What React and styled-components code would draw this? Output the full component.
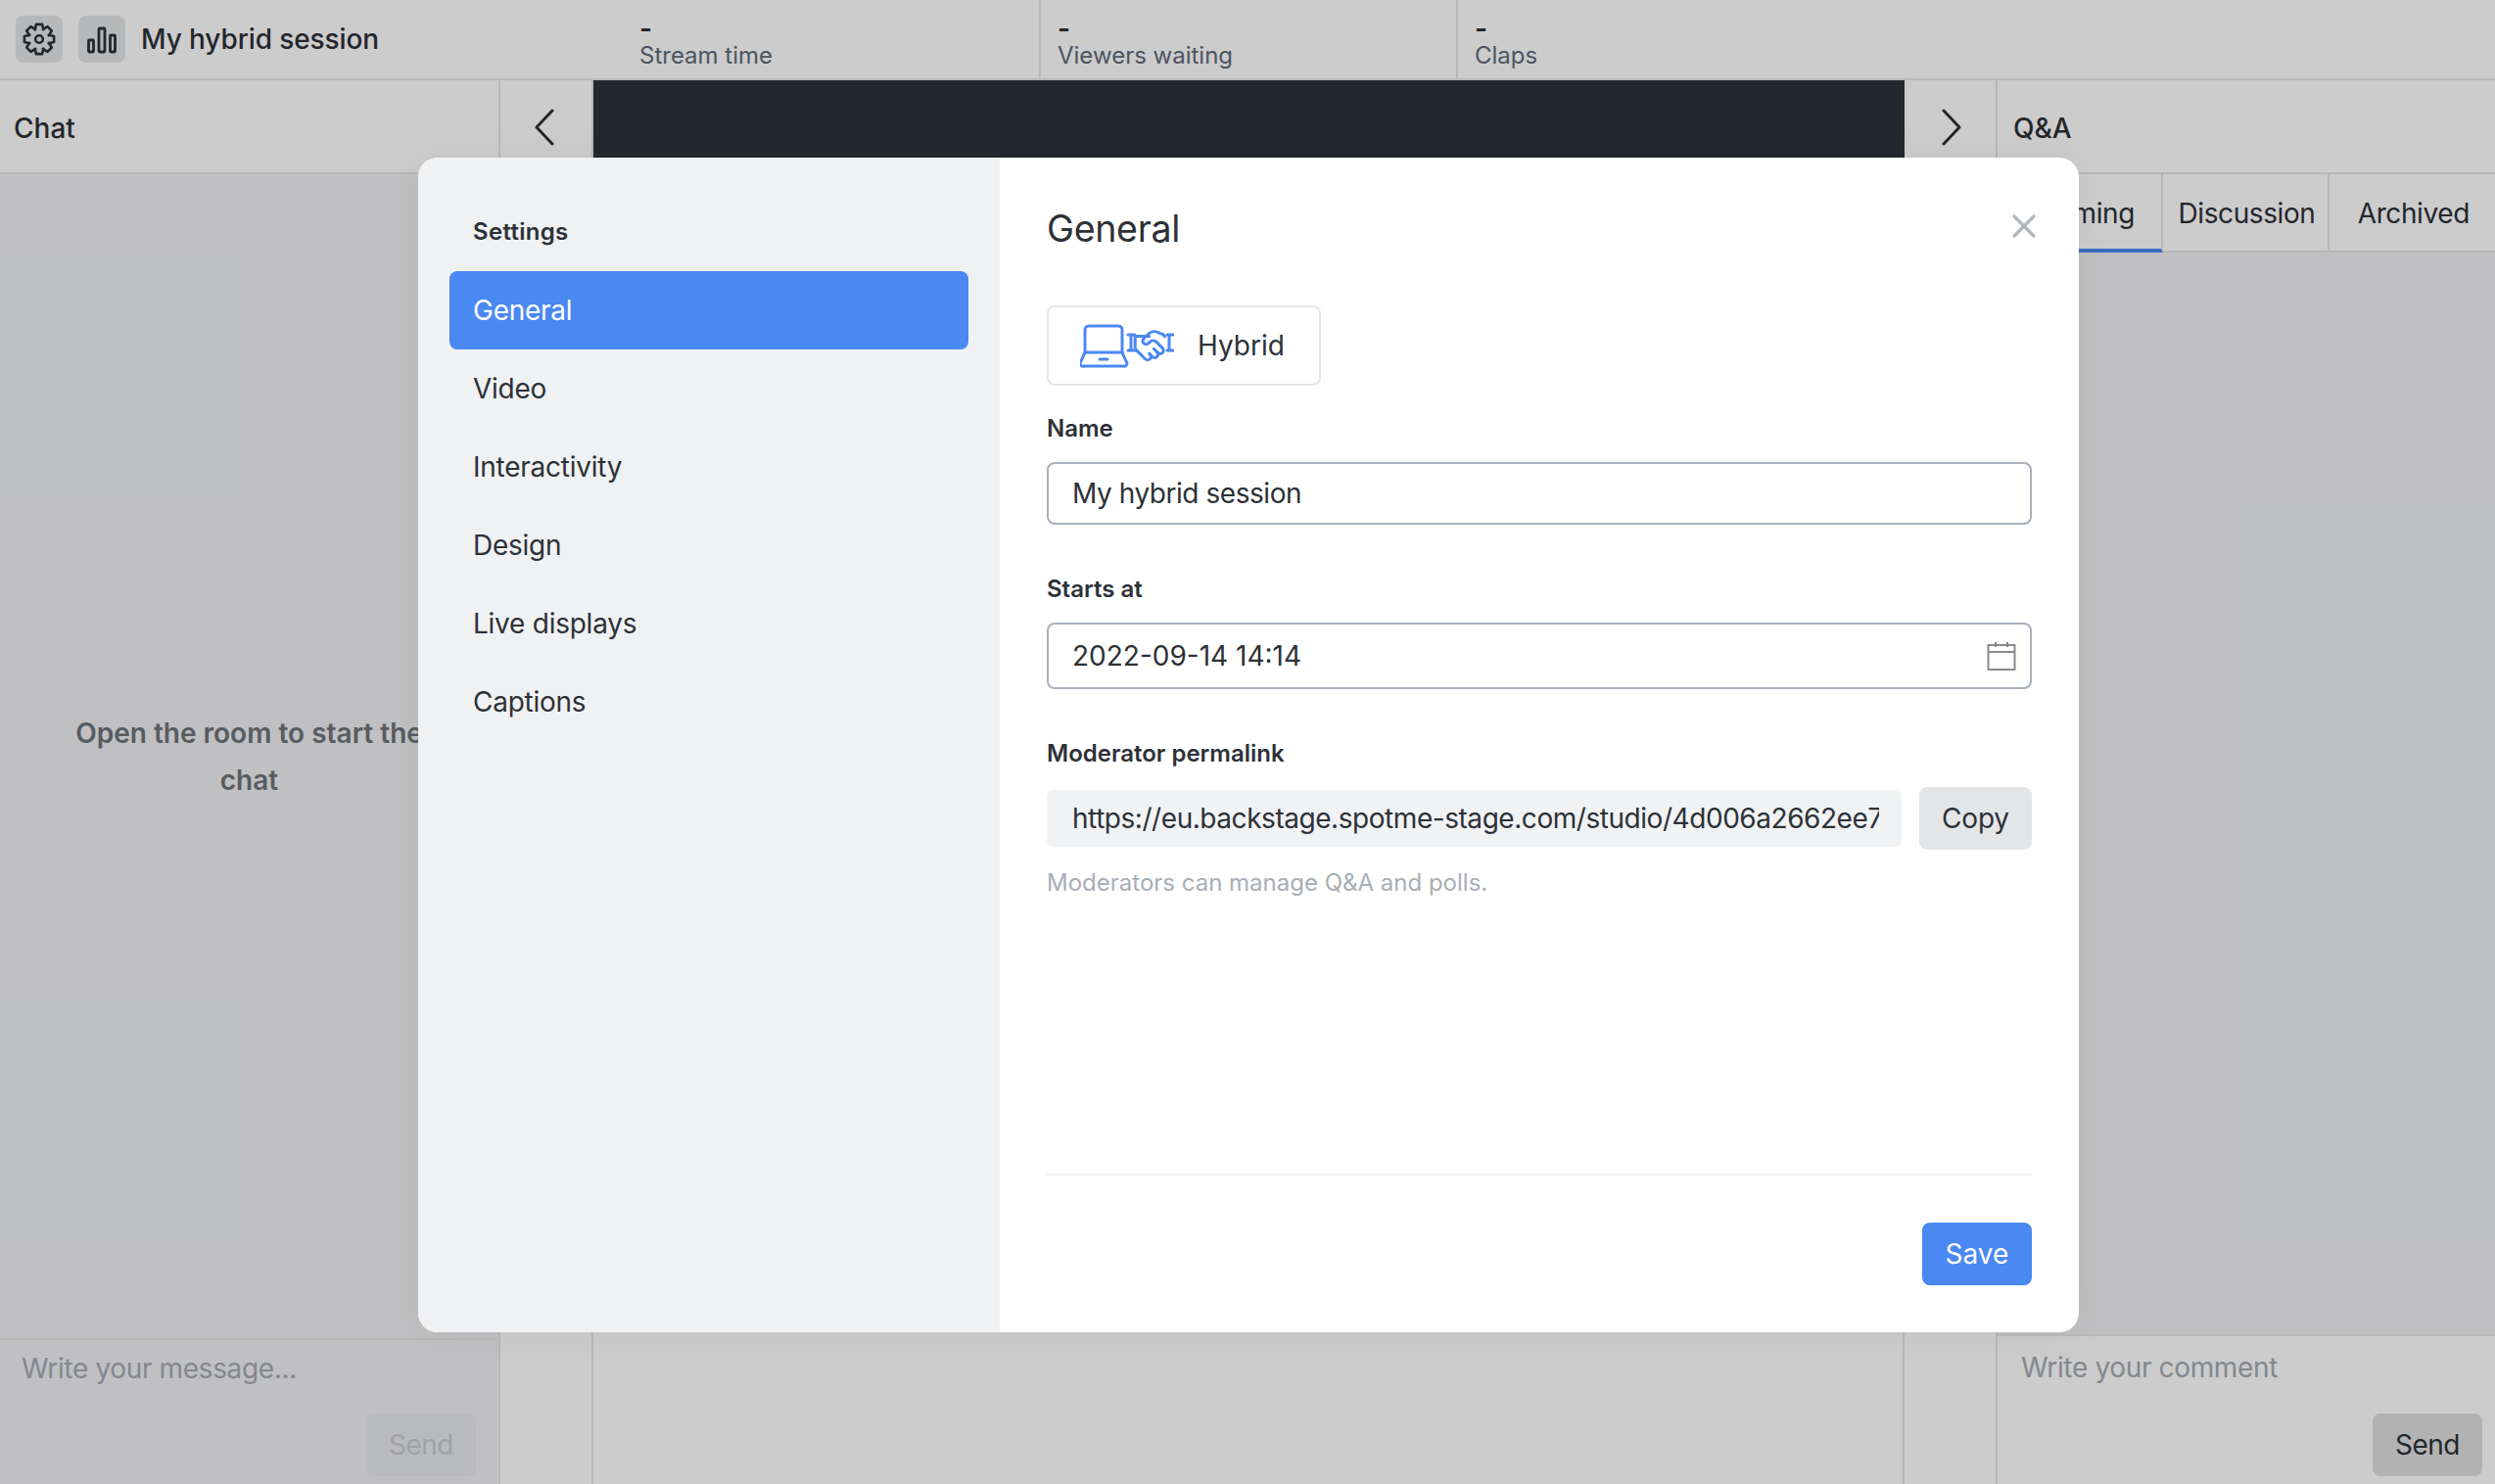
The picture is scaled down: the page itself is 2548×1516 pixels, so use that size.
import React from 'react';
import styled, { createGlobalStyle } from 'styled-components';
import { X } from 'lucide-react';

const GlobalStyle = createGlobalStyle`
  html, body {
    margin: 0;
    padding: 0;
    background: #fff;
    font-family: Inter, "Noto Sans", sans-serif;
    letter-spacing: -0.3px;
    color: #2d3137;
  }
  * { box-sizing: border-box; }
`;

const Page = styled.div`
  position: relative;
  width: 2548px;
  height: 1516px;
  overflow: hidden;
  display: flex;
  flex-direction: column;
  background: #fff;
`;

const TopBar = styled.header`
  height: 82px;
  flex: none;
  display: flex;
  border-bottom: 2px solid #e6e6e6;
`;

const SessionInfo = styled.div`
  width: 635px;
  display: flex;
  align-items: center;
  gap: 16px;
  padding-left: 16px;
`;

const IconButton = styled.button`
  width: 48px;
  height: 48px;
  padding: 0;
  border: 0;
  border-radius: 8px;
  background: #e5e6e8;
  color: #2d3137;
  display: flex;
  align-items: center;
  justify-content: center;
`;

const SessionName = styled.div`
  font-size: 28px;
  font-weight: 500;
  letter-spacing: -0.1px;
`;

const Stat = styled.div`
  width: 426px;
  padding: 14px 0 0 ${(p) => (p.$first ? 18 : 17)}px;
  border-left: ${(p) => (p.$first ? '0' : '2px solid #e6e6e6')};
`;

const StatValue = styled.div`
  font-size: 28px;
  font-weight: 600;
  line-height: 30px;
  height: 28px;
`;

const StatLabel = styled.div`
  font-size: 24px;
  line-height: 30px;
  letter-spacing: 0;
  color: #5f6b77;
`;

const Columns = styled.div`
  flex: 1;
  display: flex;
  min-height: 0;
`;

const Panel = styled.section`
  display: flex;
  flex-direction: column;
  width: ${(p) => p.$width}px;
  flex: ${(p) => (p.$width ? 'none' : '1')};
  border-right: ${(p) => (p.$width ? '2px solid #e6e6e6' : '0')};
`;

const PanelHeader = styled.div`
  height: 96px;
  flex: none;
  display: flex;
  align-items: center;
  padding: 3px 0 0 ${(p) => p.$pad}px;
  font-size: 28px;
  font-weight: 500;
  letter-spacing: 0;
  border-bottom: 2px solid #e6e6e6;
`;

const NavCell = styled.div`
  height: 96px;
  display: flex;
  align-items: center;
  justify-content: center;
  padding: ${(p) => (p.$right ? '0 0 0 3px' : '0 3px 0 0')};
  color: #2d3137;
`;

const Stage = styled.div`
  height: 94px;
  margin-right: -2px;
  background: #2d3137;
`;

const Tabs = styled.div`
  height: 80px;
  flex: none;
  display: flex;
  border-bottom: 2px solid #e6e6e6;
`;

const Tab = styled.div`
  width: 33.333%;
  flex: none;
  display: flex;
  align-items: center;
  justify-content: center;
  padding: 4px ${(p) => (p.$active ? 20 : 0)}px 0 ${(p) => (p.$active ? 0 : 3)}px;
  font-size: 28px;
  letter-spacing: -0.4px;
  margin-bottom: -2px;
  border-right: ${(p) => (p.$last ? '0' : '2px solid #e6e6e6')};
  border-bottom: 4px solid ${(p) => (p.$active ? '#4a88f2' : 'transparent')};
`;

const PanelBody = styled.div`
  flex: 1;
  display: flex;
  align-items: center;
  justify-content: center;
  background: #f0f1f3;
  padding: 0 60px;
`;

const EmptyText = styled.p`
  margin: 0;
  text-align: center;
  font-size: 28px;
  line-height: 48px;
  font-weight: 600;
  letter-spacing: 0;
  color: #6f747a;
`;

const Composer = styled.div`
  height: ${(p) => p.$height}px;
  flex: none;
  padding: ${(p) => p.$top}px ${(p) => p.$right}px 8px ${(p) => p.$left}px;
  display: flex;
  flex-direction: column;
  background: ${(p) => (p.$disabled ? '#f0f1f3' : '#fff')};
  border-top: 2px solid #e6e6e6;
`;

const ComposerInput = styled.input`
  border: 0;
  outline: 0;
  padding: 0;
  background: transparent;
  font: 400 28px/36px Inter, sans-serif;
  letter-spacing: -0.35px;
  &::placeholder { color: #a5abb2; opacity: 1; }
`;

const SendButton = styled.button`
  width: 112px;
  height: 64px;
  margin-top: auto;
  align-self: flex-end;
  border: 0;
  border-radius: 8px;
  font: 400 28px Inter, sans-serif;
  letter-spacing: -0.5px;
  color: ${(p) => (p.disabled ? '#c9cbcd' : '#2d3137')};
  background: ${(p) => (p.disabled ? '#e8e9eb' : '#e0e0e1')};
`;

const Overlay = styled.div`
  position: absolute;
  inset: 0;
  padding: 161px 0 0 2px;
  display: flex;
  justify-content: center;
  align-items: flex-start;
  background: rgba(0, 0, 0, 0.2);
`;

const Modal = styled.div`
  width: 1696px;
  height: 1200px;
  display: flex;
  border-radius: 20px;
  overflow: hidden;
  background: #fff;
  box-shadow: 0 0 40px rgba(0, 0, 0, 0.05);
`;

const Sidebar = styled.nav`
  width: 594px;
  flex: none;
  padding: 60px 32px 0 32px;
  background: #f0f1f3;
`;

const SidebarTitle = styled.div`
  font-size: 24px;
  font-weight: 600;
  line-height: 32px;
  letter-spacing: 0.3px;
  padding-left: 24px;
  margin-bottom: 24px;
`;

const SidebarItem = styled.div`
  height: 80px;
  display: flex;
  align-items: center;
  padding-left: 24px;
  font-size: 28px;
  letter-spacing: -0.25px;
  border-radius: 8px;
  color: ${(p) => (p.$active ? '#fff' : '#2d3137')};
  background: ${(p) => (p.$active ? '#4a88f2' : 'transparent')};
`;

const Main = styled.div`
  position: relative;
  flex: 1;
  display: flex;
  flex-direction: column;
  padding: 48px 48px 48px 48px;
`;

const Title = styled.h2`
  margin: 0 0 53px;
  font-size: 37.5px;
  line-height: 50px;
  font-weight: 400;
`;

const CloseButton = styled.button`
  position: absolute;
  top: 50px;
  right: 36px;
  width: 40px;
  height: 40px;
  padding: 0;
  border: 0;
  background: transparent;
  color: #b0b7bf;
  display: flex;
  align-items: center;
  justify-content: center;
`;

const TypeBadge = styled.div`
  width: 280px;
  height: 82px;
  display: flex;
  align-items: center;
  gap: 24px;
  padding-left: 32px;
  font-size: 28px;
  letter-spacing: 0;
  border: 2px solid #e6e6e6;
  border-radius: 8px;
  margin-bottom: 28px;
`;

const Field = styled.div`
  display: flex;
  flex-direction: column;
  margin-bottom: ${(p) => p.$gap}px;
`;

const Label = styled.label`
  font-size: 24px;
  line-height: 32px;
  font-weight: 600;
  letter-spacing: 0;
  margin-bottom: 18px;
`;

const InputWrap = styled.div`
  position: relative;
  height: ${(p) => p.$height}px;
`;

const TextInput = styled.input`
  width: 100%;
  height: 100%;
  padding: 0 24px;
  border: 2px solid #a9b0ba;
  border-radius: 8px;
  outline: 0;
  font: 400 28px Inter, sans-serif;
  letter-spacing: ${(p) => p.$spacing}px;
  color: #2d3137;
`;

const CalendarSlot = styled.span`
  position: absolute;
  right: 16px;
  top: 19px;
  color: #8a8a8a;
  display: flex;
`;

const CopyRow = styled.div`
  display: flex;
  align-items: center;
  gap: 18px;
`;

const ReadOnlyInput = styled.input`
  flex: 1;
  min-width: 0;
  height: 58px;
  padding: 0 23px 0 26px;
  border: 0;
  border-radius: 6px;
  outline: 0;
  background: #f1f2f4;
  font: 400 28px Inter, sans-serif;
  letter-spacing: -0.45px;
  color: #2d3137;
`;

const CopyButton = styled.button`
  width: 115px;
  height: 64px;
  flex: none;
  border: 0;
  border-radius: 8px;
  background: #e4e5e7;
  font: 400 28px Inter, sans-serif;
  letter-spacing: -0.2px;
  color: #2d3137;
`;

const Hint = styled.div`
  margin-top: 18px;
  font-size: 24px;
  line-height: 32px;
  letter-spacing: 0;
  color: #a9aeb5;
`;

const Footer = styled.div`
  margin-top: auto;
  height: 114px;
  display: flex;
  justify-content: flex-end;
  align-items: flex-end;
  border-top: 2px solid #f0f0f0;
`;

const SaveButton = styled.button`
  width: 112px;
  height: 64px;
  border: 0;
  border-radius: 8px;
  background: #4a88f2;
  color: #fff;
  font: 400 28px Inter, sans-serif;
  letter-spacing: 0;
`;

// eight toothed cog, the packaged gears don't have the same teeth
const cogPath = () => {
  const pts = [];
  for (let i = 0; i < 8; i++) {
    const a = (i * Math.PI) / 4 - Math.PI / 2;
    [[-0.42, 10.6], [-0.2, 15.4], [0.2, 15.4], [0.42, 10.6]].forEach(([da, r]) => {
      pts.push(`${(18 + r * Math.cos(a + da)).toFixed(2)} ${(18 + r * Math.sin(a + da)).toFixed(2)}`);
    });
  }
  return `M${pts.join('L')}Z`;
};

const GearIcon = () => (
  <svg width="36" height="36" viewBox="0 0 36 36" fill="none" stroke="currentColor" strokeWidth="2.6" strokeLinejoin="round">
    <path d={cogPath()} />
    <circle cx="18" cy="18" r="3.8" />
  </svg>
);

const BarsIcon = () => (
  <svg width="32" height="32" viewBox="0 0 32 32" fill="none" stroke="currentColor" strokeWidth="2.8" strokeLinejoin="round">
    <rect x="2.5" y="17" width="5" height="12" rx="1" />
    <rect x="13" y="5" width="6" height="24" rx="1" />
    <rect x="24.5" y="12" width="5" height="17" rx="1" />
  </svg>
);

const ChevronIcon = ({ right }) => (
  <svg width="20" height="38" viewBox="0 0 20 38" fill="none" stroke="currentColor" strokeWidth="3" strokeLinecap="round" strokeLinejoin="round">
    <path d={right ? 'M2 2l16 17L2 36' : 'M18 2L2 19l16 17'} />
  </svg>
);

const CalendarIcon = () => (
  <svg width="30" height="30" viewBox="0 0 30 30" fill="none" stroke="currentColor" strokeWidth="2">
    <rect x="1.5" y="4" width="27" height="25" />
    <path d="M1.5 11h27M9 1v5M21 1v5" />
  </svg>
);

const HybridIcon = () => (
  <svg width="96" height="48" viewBox="0 0 96 48" fill="none" stroke="#4a88f2" strokeWidth="3" strokeLinecap="round" strokeLinejoin="round">
    <path d="M5 31V8a4 4 0 0 1 4-4h30a4 4 0 0 1 4 4v23" />
    <path d="M5 31h38l4 9a3 3 0 0 1-3 5H4a3 3 0 0 1-3-5z" />
    <path d="M20 38h8" />
    <path d="M49 13h7M49 29h7M52 13v16M89 13h6M89 29h6M91 13v16" />
    <g transform="translate(53 5) scale(1.6)" strokeWidth="1.9">
      <path d="m11 17 2 2a1 1 0 1 0 3-3" />
      <path d="m14 14 2.5 2.5a1 1 0 1 0 3-3l-3.88-3.88a3 3 0 0 0-4.24 0l-.88.88a1 1 0 1 1-3-3l2.81-2.81a5.79 5.79 0 0 1 7.06-.87l.47.28a2 2 0 0 0 1.42.25L21 6" />
      <path d="M2 6 2 14l6.5 6.5a1 1 0 1 0 3-3" />
      <path d="M2 6h9" />
    </g>
  </svg>
);

const sections = ['General', 'Video', 'Interactivity', 'Design', 'Live displays', 'Captions'];
const stats = ['Stream time', 'Viewers waiting', 'Claps'];
const tabs = ['Upcoming', 'Discussion', 'Archived'];

export default function App() {
  return (
    <Page>
      <GlobalStyle />
      <TopBar>
        <SessionInfo>
          <IconButton><GearIcon /></IconButton>
          <IconButton><BarsIcon /></IconButton>
          <SessionName>My hybrid session</SessionName>
        </SessionInfo>
        {stats.map((label, i) => (
          <Stat key={label} $first={i === 0}>
            <StatValue>-</StatValue>
            <StatLabel>{label}</StatLabel>
          </Stat>
        ))}
      </TopBar>

      <Columns>
        <Panel $width={511}>
          <PanelHeader $pad={14}>Chat</PanelHeader>
          <PanelBody>
            <EmptyText>Open the room to start the chat</EmptyText>
          </PanelBody>
          <Composer $height={149} $disabled $top={11} $left={22} $right={23}>
            <ComposerInput placeholder="Write your message..." readOnly />
            <SendButton disabled>Send</SendButton>
          </Composer>
        </Panel>

        <Panel $width={95}>
          <NavCell><ChevronIcon /></NavCell>
        </Panel>

        <Panel $width={1339}>
          <Stage />
        </Panel>

        <Panel $width={95}>
          <NavCell $right><ChevronIcon right /></NavCell>
        </Panel>

        <Panel>
          <PanelHeader $pad={16}>Q&amp;A</PanelHeader>
          <Tabs>
            {tabs.map((tab, i) => (
              <Tab key={tab} $active={i === 0} $last={i === tabs.length - 1}>{tab}</Tab>
            ))}
          </Tabs>
          <PanelBody />
          <Composer $height={153} $top={14} $left={24} $right={13}>
            <ComposerInput placeholder="Write your comment" readOnly />
            <SendButton>Send</SendButton>
          </Composer>
        </Panel>
      </Columns>

      <Overlay>
        <Modal>
          <Sidebar>
            <SidebarTitle>Settings</SidebarTitle>
            {sections.map((item, i) => (
              <SidebarItem key={item} $active={i === 0}>{item}</SidebarItem>
            ))}
          </Sidebar>
          <Main>
            <Title>General</Title>
            <CloseButton><X size={40} strokeWidth={2} /></CloseButton>
            <TypeBadge><HybridIcon />Hybrid</TypeBadge>
            <Field $gap={50}>
              <Label>Name</Label>
              <InputWrap $height={64}>
                <TextInput $spacing={-0.45} defaultValue="My hybrid session" />
              </InputWrap>
            </Field>
            <Field $gap={50}>
              <Label>Starts at</Label>
              <InputWrap $height={68}>
                <TextInput $spacing={0} defaultValue="2022-09-14 14:14" />
                <CalendarSlot><CalendarIcon /></CalendarSlot>
              </InputWrap>
            </Field>
            <Field $gap={0}>
              <Label>Moderator permalink</Label>
              <CopyRow>
                <ReadOnlyInput readOnly value="https://eu.backstage.spotme-stage.com/studio/4d006a2662ee7e1f0a6d4c9b" />
                <CopyButton>Copy</CopyButton>
              </CopyRow>
              <Hint>Moderators can manage Q&amp;A and polls.</Hint>
            </Field>
            <Footer><SaveButton>Save</SaveButton></Footer>
          </Main>
        </Modal>
      </Overlay>
    </Page>
  );
}
